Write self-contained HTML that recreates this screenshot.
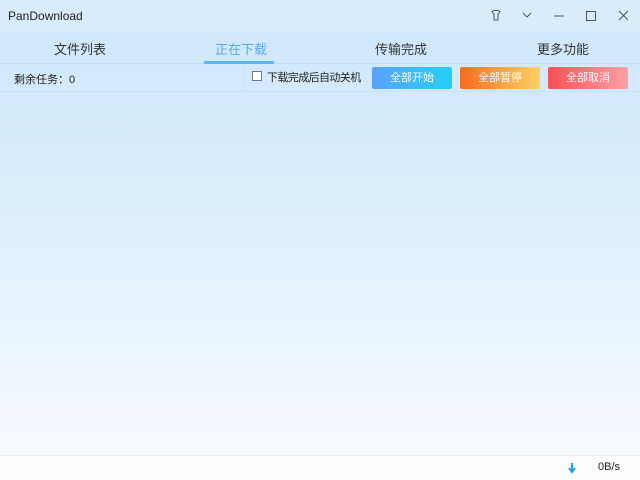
<!DOCTYPE html>
<html><head><meta charset="utf-8"><style>
*{margin:0;padding:0;box-sizing:border-box}
body{width:640px;height:480px;overflow:hidden;font-family:"Liberation Sans","Noto Sans CJK SC",sans-serif;background:linear-gradient(#cfe7fb 0%,#d6ecfc 30%,#e8f4fd 65%,#f8fbff 100%);position:relative;color:#222}
.a{position:absolute}
.tab{position:absolute;top:39px;font-size:13px;color:#333}
.btn{position:absolute;top:67px;width:80px;height:22px;border-radius:2px;color:#fff;font-size:11px;text-align:center;line-height:22px}
</style></head><body>
<div class="a" style="left:0;top:0;width:640px;height:32px;background:#d8ecfb"></div>
<div class="a" style="left:8px;top:9px;font-size:12px">PanDownload</div>
<svg class="a" style="left:488px;top:8px" width="140" height="16" viewBox="0 0 140 16" fill="none" stroke="#555" stroke-width="1">
<path d="M4 4l2-1.5h4L12 4l-1.5 2H10v6H6V6H5.5z"/>
<path d="M35 5l4 4 4-4"/>
<path d="M66 8h10"/>
<rect x="98.5" y="3.5" width="9" height="9"/>
<path d="M131 3l9 9M140 3l-9 9"/>
</svg>
<div class="a" style="left:0;top:63px;width:640px;height:1px;background:#c4def4"></div>
<div class="tab" style="left:54px">文件列表</div>
<div class="tab" style="left:215px;color:#5aa9ef">正在下载</div>
<div class="a" style="left:204px;top:61px;width:70px;height:3px;background:#56b8f2"></div>
<div class="tab" style="left:375px">传输完成</div>
<div class="tab" style="left:537px">更多功能</div>
<div class="a" style="left:14px;top:71px;font-size:11px">剩余任务：0</div>
<div class="a" style="left:244px;top:64px;width:1px;height:27px;background:#c8e0f4"></div>
<div class="a" style="left:0;top:91px;width:640px;height:1px;background:#c8e0f4"></div>
<div class="a" style="left:252px;top:71px;width:10px;height:10px;border:1px solid #777;background:#fff"></div>
<div class="a" style="left:267px;top:69px;font-size:11px;letter-spacing:-0.6px">下载完成后自动关机</div>
<div class="btn" style="left:372px;background:linear-gradient(90deg,#5aa2fa,#22d0f7)">全部开始</div>
<div class="btn" style="left:460px;background:linear-gradient(90deg,#fb6b1f,#fad264)">全部暂停</div>
<div class="btn" style="left:548px;background:linear-gradient(90deg,#fb5056,#fca0a4)">全部取消</div>
<div class="a" style="left:0;top:455px;width:640px;height:1px;background:#e6eef6"></div>
<div class="a" style="left:0;top:456px;width:640px;height:24px;background:#fbfdff"></div>
<svg class="a" style="left:567px;top:462px" width="10" height="12"><path d="M5 1v8M2 6l3 4 3-4" stroke="#2a9be8" stroke-width="2" fill="none"/></svg>
<div class="a" style="left:598px;top:461px;font-size:11px">0B/s</div>
</body></html>
